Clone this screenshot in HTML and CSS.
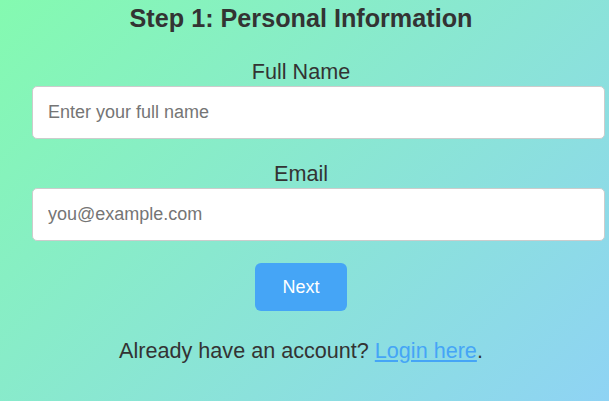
FILE: index.html
```html
<!DOCTYPE html>
<html lang="en">
<head>
<meta charset="utf-8">
<title>Step 1</title>
<link rel="stylesheet" href="styles.css">
</head>
<body>
<form class="form">
  <h2 class="title">Step 1: Personal Information</h2>
  <label class="label" for="name">Full Name</label>
  <input class="field" id="name" type="text" placeholder="Enter your full name">
  <label class="label" for="email">Email</label>
  <input class="field" id="email" type="email" placeholder="you@example.com">
  <div class="actions"><button class="btn" type="button">Next</button></div>
  <p class="note">Already have an account? <a class="link" href="#">Login here</a>.</p>
</form>
</body>
</html>
```
FILE: styles.css
```css
html, body {
  margin: 0;
  height: 100%;
}
body {
  background: linear-gradient(135deg, #84fab0 0%, #8fd3f4 100%);
  font-family: "Liberation Sans", Arial, sans-serif;
  font-size: 18px;
  color: #333;
  overflow: hidden;
}
.form {
  width: 538px;
  padding: 4px 0 0 32px;
}
.title {
  margin: 0 0 26px;
  font-size: 1.4em;
  font-weight: bold;
  text-align: center;
}
.label {
  display: block;
  font-size: 1.2em;
  text-align: center;
  margin-bottom: 1px;
}
.field {
  display: block;
  width: calc(100% + 3px);
  padding: 15px;
  margin: 0 0 22px;
  border: 1px solid #ccc;
  border-radius: 5px;
  font-family: inherit;
  font-size: 18px;
  line-height: normal;
  background: #fff;
  color: #333;
}
.field::placeholder {
  color: #757575;
}
.actions {
  text-align: center;
}
.btn {
  background: #45a5f6;
  color: #fff;
  border: none;
  border-radius: 6px;
  padding: 13.5px 27px;
  font-family: inherit;
  font-size: 18px;
  line-height: normal;
}
.note {
  margin: 27px 0 0;
  text-align: center;
  font-size: 1.2em;
}
.link {
  color: #45a5f6;
}
```
